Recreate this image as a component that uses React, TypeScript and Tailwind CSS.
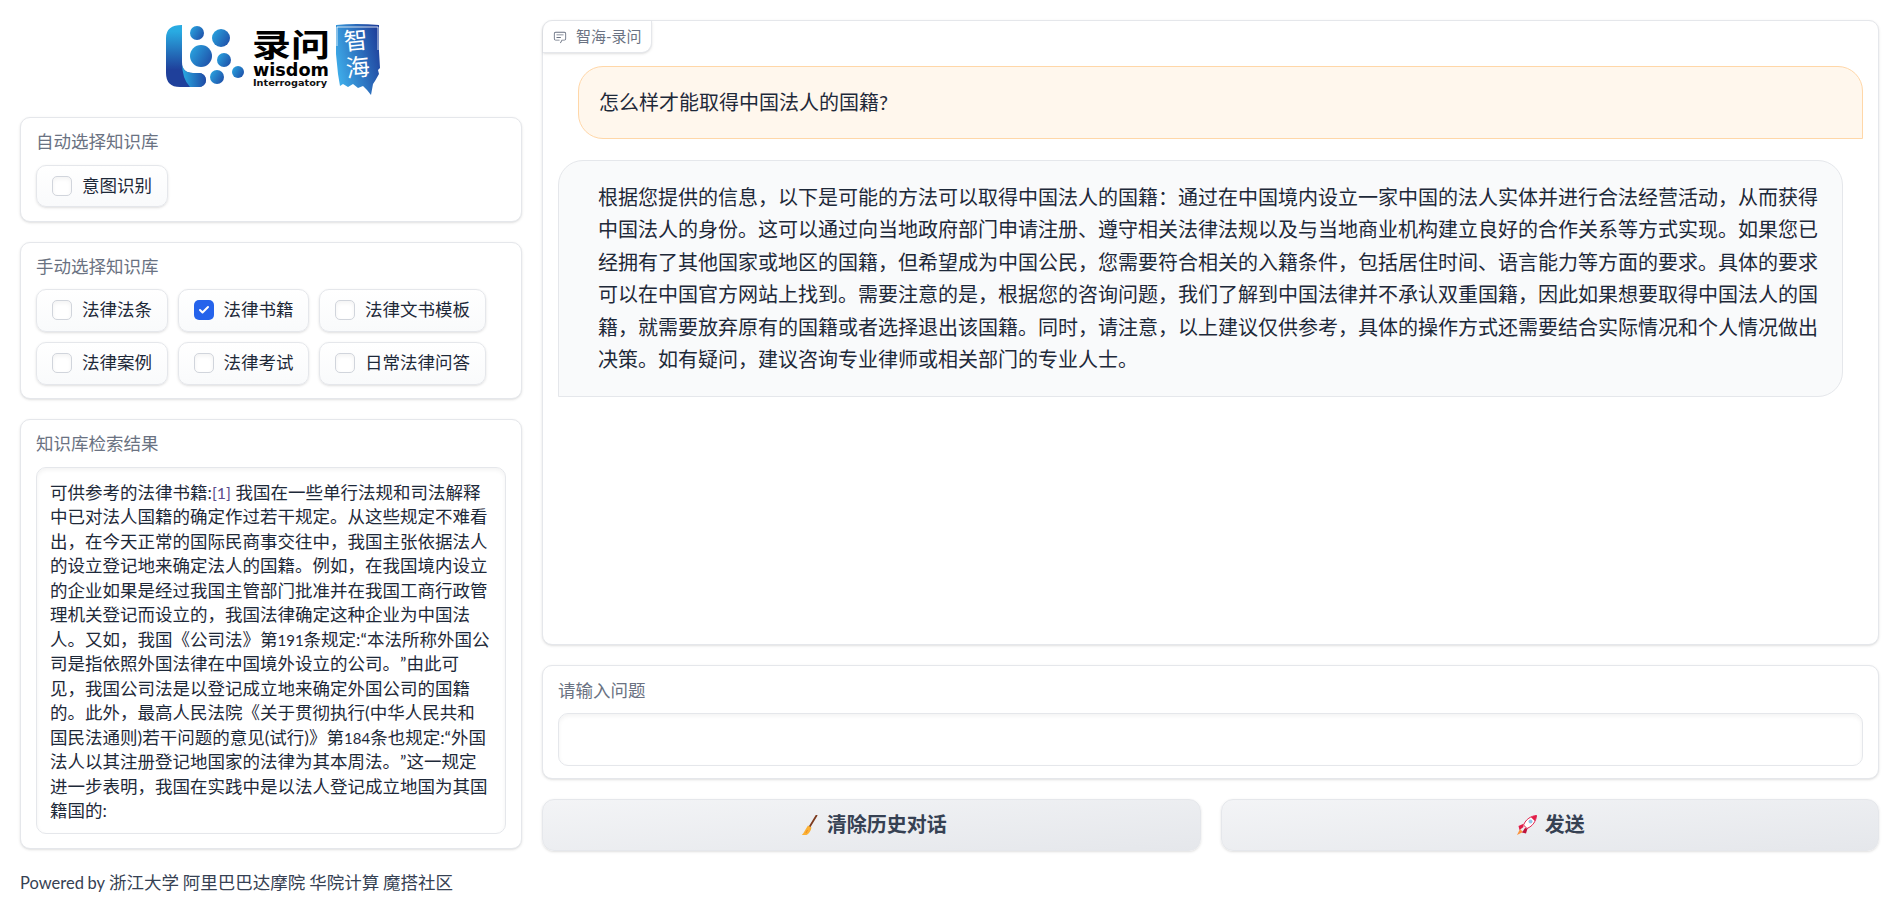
import { Check } from 'lucide-react'

const autoOptions = [{ label: '意图识别', checked: false }]

const manualOptions = [
  { label: '法律法条', checked: false },
  { label: '法律书籍', checked: true },
  { label: '法律文书模板', checked: false },
  { label: '法律案例', checked: false },
  { label: '法律考试', checked: false },
  { label: '日常法律问答', checked: false },
]

const answer =
  '根据您提供的信息，以下是可能的方法可以取得中国法人的国籍：通过在中国境内设立一家中国的法人实体并进行合法经营活动，从而获得中国法人的身份。这可以通过向当地政府部门申请注册、遵守相关法律法规以及与当地商业机构建立良好的合作关系等方式实现。如果您已经拥有了其他国家或地区的国籍，但希望成为中国公民，您需要符合相关的入籍条件，包括居住时间、语言能力等方面的要求。具体的要求可以在中国官方网站上找到。需要注意的是，根据您的咨询问题，我们了解到中国法律并不承认双重国籍，因此如果想要取得中国法人的国籍，就需要放弃原有的国籍或者选择退出该国籍。同时，请注意，以上建议仅供参考，具体的操作方式还需要结合实际情况和个人情况做出决策。如有疑问，建议咨询专业律师或相关部门的专业人士。'

function Logo() {
  return (
    <svg width="214" height="88" viewBox="0 -8 214 88" className="block">
      <defs>
        <linearGradient id="stem" x1="0" y1="0" x2="0" y2="1">
          <stop offset="0.1" stopColor="#29abe2" />
          <stop offset="0.72" stopColor="#1f409b" />
        </linearGradient>
        <linearGradient id="foot" x1="0" y1="0" x2="1" y2="0">
          <stop offset="0" stopColor="#29abe2" />
          <stop offset="1" stopColor="#1f4aa5" />
        </linearGradient>
        <linearGradient id="dot" x1="0" y1="0.2" x2="1" y2="0.8">
          <stop offset="0" stopColor="#29a3df" />
          <stop offset="1" stopColor="#1f4fa8" />
        </linearGradient>
        <linearGradient id="seal" x1="0" y1="0.7" x2="1" y2="0.3">
          <stop offset="0" stopColor="#3fb0ec" />
          <stop offset="1" stopColor="#1f419c" />
        </linearGradient>
      </defs>
      <path d="M16 1V38Q16 49 27 49H33A7 7 0 0 1 33 63H14Q0 63 0 49V14Q0 1 16 1Z" fill="url(#stem)" />
      <path d="M16 38Q16 49 27 49H33A7 7 0 0 1 33 63H24Q16 55 16 38Z" fill="url(#foot)" />
      <circle cx="31" cy="9" r="7" fill="url(#dot)" />
      <circle cx="55" cy="14" r="9" fill="url(#dot)" />
      <circle cx="35" cy="32" r="11" fill="url(#dot)" />
      <circle cx="58" cy="36" r="7" fill="url(#dot)" />
      <circle cx="51" cy="53" r="7" fill="url(#dot)" />
      <circle cx="72" cy="48" r="6" fill="url(#dot)" />
      <text x="86" y="32" fontSize="31" fontWeight="700" textLength="78" lengthAdjust="spacingAndGlyphs" fill="#000" fontFamily="'Noto Sans CJK SC',sans-serif">录问</text>
      <text x="87" y="52" fontSize="17" fontWeight="700" textLength="76" lengthAdjust="spacingAndGlyphs" fill="#000" fontFamily="'DejaVu Sans',sans-serif">wisdom</text>
      <text x="87" y="62" fontSize="9" fontWeight="700" textLength="74" lengthAdjust="spacingAndGlyphs" fill="#111" fontFamily="'DejaVu Sans',sans-serif">Interrogatory</text>
      <path d="M170 1Q190 -1 213 1V27L214 44L212 46L213 50L209 57L207 60L205 71L201 66L197 62L192 64L187 60L182 63L177 60L174 62L172 50L170 30Z" fill="url(#seal)" />
      <path d="M171 22V3H212V26" fill="none" stroke="#fff" strokeWidth="1" opacity="0.8" />
      <text x="190" y="25" fontSize="24" fontWeight="400" textAnchor="middle" transform="rotate(-6 190 18)" fill="#fff" fontFamily="'Noto Sans CJK SC',sans-serif">智</text>
      <text x="192" y="52" fontSize="24" fontWeight="400" textAnchor="middle" transform="rotate(-6 192 45)" fill="#fff" fontFamily="'Noto Sans CJK SC',sans-serif">海</text>
    </svg>
  )
}

function ChatIcon() {
  return (
    <svg width="14" height="14" viewBox="0 0 32 32" fill="currentColor" className="shrink-0 text-gray-500">
      <path d="M17.74 30L16 29l4-7h6a2 2 0 0 0 2-2V8a2 2 0 0 0-2-2H6a2 2 0 0 0-2 2v12a2 2 0 0 0 2 2h9v2H6a4 4 0 0 1-4-4V8a4 4 0 0 1 4-4h20a4 4 0 0 1 4 4v12a4 4 0 0 1-4 4h-4.84Z" />
      <path d="M8 10h16v2H8zm0 6h10v2H8z" />
    </svg>
  )
}

function BroomIcon() {
  return (
    <svg width="21" height="20" viewBox="-3.5 0 21 20" className="shrink-0">
      <path d="M15 0.5L8 12" stroke="#7c3a1e" strokeWidth="1.8" strokeLinecap="round" />
      <path d="M6.5 10.5L10 12.5C9.5 16 7 19 5 20H0.3C2.5 18 4 14 6.5 10.5Z" fill="#fbb034" />
      <path d="M6 15L4.5 18" stroke="#f08a1d" strokeWidth="1" />
    </svg>
  )
}

function RocketIcon() {
  return (
    <svg width="20" height="20" viewBox="0 0 20 20" className="shrink-0">
      <path d="M3 14L0 20L6 17Z" fill="#fb923c" />
      <path d="M6 9L1.5 11L2.5 15L6.5 12Z" fill="#e11d48" />
      <path d="M10.5 13.5L9 18.5L5 17.5L8 13Z" fill="#be123c" />
      <path d="M19.5 .5C14 1 9 4 6.5 10L10 13.5C16 11 19 6 19.5 .5Z" fill="#fff" stroke="#e11d48" strokeWidth="1" />
      <path d="M19.5 .5C17.5 .7 15.6 1.3 14 2.2L17.8 6C18.8 4.3 19.3 2.4 19.5 .5Z" fill="#e11d48" />
      <circle cx="13.5" cy="6.5" r="2" fill="#93c5e8" />
    </svg>
  )
}

function CheckItem({ label, checked }: { label: string; checked: boolean }) {
  return (
    <label className="flex h-[42.5px] items-center gap-[10px] rounded-[10px] border border-gray-200 bg-gradient-to-b from-white to-gray-50 pr-[14.5px] pl-[15px] text-gray-800 shadow-sm">
      {checked ? (
        <span className="flex h-5 w-5 items-center justify-center rounded-[5px] bg-[#2563eb]">
          <Check size={12} strokeWidth={4} className="text-white" />
        </span>
      ) : (
        <span className="h-5 w-5 rounded-[5px] border border-gray-300 bg-white shadow-inner" />
      )}
      <span>{label}</span>
    </label>
  )
}

function Card({ title, children }: { title: string; children: React.ReactNode }) {
  return (
    <section className="rounded-[10px] border border-gray-200 bg-white px-[15px] pt-3 pb-[13.5px] shadow-sm">
      <div className="mb-[10px] text-gray-500">{title}</div>
      {children}
    </section>
  )
}

function ActionButton({ icon, label }: { icon: React.ReactNode; label: string }) {
  return (
    <button className="flex h-[52px] flex-1 items-center justify-center gap-[8px] rounded-[12px] border border-gray-200 bg-gradient-to-br from-gray-100 to-gray-200 pl-[2px] text-[20px] font-bold text-gray-700 shadow-sm">
      {icon}
      <span>{label}</span>
    </button>
  )
}

export default function App() {
  return (
    <div className="min-h-screen bg-white px-5 pt-5 text-[17.5px] leading-[24.5px] text-gray-800 font-['Lato','Noto_Sans_CJK_SC',sans-serif] [text-spacing-trim:space-all]">
      <div className="flex items-start gap-5">
        {/* Left column */}
        <div className="flex w-[502px] shrink-0 flex-col gap-5">
          <div className="flex h-[77px] items-center justify-center pt-[3px] pl-[3px]">
            <Logo />
          </div>

          <Card title="自动选择知识库">
            <div className="flex flex-wrap gap-x-[10px] gap-y-[10.5px]">
              {autoOptions.map((o) => (
                <CheckItem key={o.label} {...o} />
              ))}
            </div>
          </Card>

          <Card title="手动选择知识库">
            <div className="flex flex-wrap gap-x-[10px] gap-y-[10.5px]">
              {manualOptions.map((o) => (
                <CheckItem key={o.label} {...o} />
              ))}
            </div>
          </Card>

          <Card title="知识库检索结果">
            <div className="rounded-[10px] border border-gray-200 bg-white px-[13px] pt-[13px] pb-[9.5px] shadow-inner">
              可供参考的法律书籍:<span className="text-[16px] text-[#5b4a8a]">[1]</span> 我国在一些单行法规和司法解释中已对法人国籍的确定作过若干规定。从这些规定不难看出，在今天正常的国际民商事交往中，我国主张依据法人的设立登记地来确定法人的国籍。例如，在我国境内设立的企业如果是经过我国主管部门批准并在我国工商行政管理机关登记而设立的，我国法律确定这种企业为中国法人。又如，我国《公司法》第<span className="text-[15px]">191</span>条规定:“本法所称外国公司是指依照外国法律在中国境外设立的公司。”由此可见，我国公司法是以登记成立地来确定外国公司的国籍的。此外，最高人民法院《关于贯彻执行(中华人民共和国民法通则)若干问题的意见(试行)》第<span className="text-[15px]">184</span>条也规定:“外国法人以其注册登记地国家的法律为其本周法。”这一规定进一步表明，我国在实践中是以法人登记成立地国为其国籍国的:
            </div>
          </Card>
        </div>

        {/* Right column */}
        <div className="flex min-w-0 flex-1 flex-col gap-5">
          <div className="relative flex h-[625px] flex-col gap-[21px] rounded-[10px] border border-gray-200 bg-white pt-[45px] pr-[15px] pl-[15px] text-[20px] leading-[32.5px] shadow-sm">
            <div className="absolute top-0 left-0 flex h-8 w-[109px] items-center gap-[9px] rounded-tl-[10px] rounded-br-[10px] border-r border-b border-gray-200 bg-white pl-[10px] text-[15px] text-gray-500 shadow-sm">
              <ChatIcon />
              <span>智海-录问</span>
            </div>

            <div className="ml-5 rounded-t-[25px] rounded-bl-[25px] border border-orange-200 bg-orange-50 py-[19px] pl-5 pr-5">
              怎么样才能取得中国法人的国籍?
            </div>

            <div className="mr-5 rounded-t-[25px] rounded-br-[25px] border border-gray-200 bg-gray-50 py-5 pr-[20px] pl-[39px]">
              {answer}
            </div>
          </div>

          <div className="rounded-[10px] border border-gray-200 bg-white px-[15px] pt-[13px] pb-3 shadow-sm">
            <div className="mb-[9px] text-gray-500">请输入问题</div>
            <div className="h-[53px] rounded-[10px] border border-gray-200 bg-white shadow-inner" />
          </div>

          <div className="flex gap-5">
            <ActionButton icon={<BroomIcon />} label="清除历史对话" />
            <ActionButton icon={<RocketIcon />} label="发送" />
          </div>
        </div>
      </div>

      <footer className="mt-5 text-gray-700 [word-spacing:-0.6px]">
        <span className="text-[16.5px]">Powered by</span> <span>浙江大学</span> <span>阿里巴巴达摩院</span> <span>华院计算</span> <span>魔搭社区</span>
      </footer>
    </div>
  )
}
